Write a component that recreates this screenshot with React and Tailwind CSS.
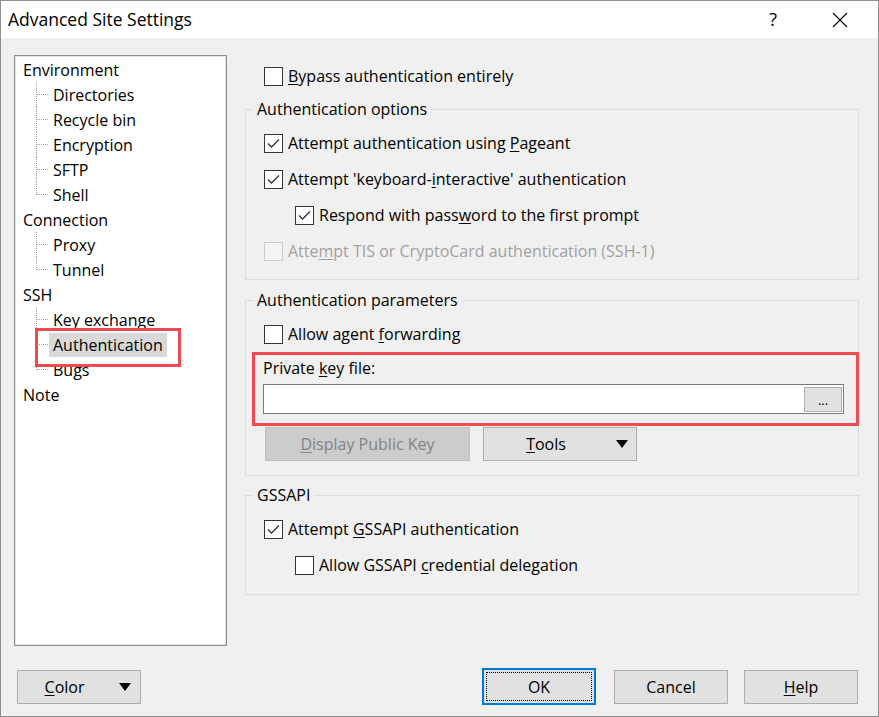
import React from "react";

const tree = [
  { label: "Environment", children: ["Directories", "Recycle bin", "Encryption", "SFTP", "Shell"] },
  { label: "Connection", children: ["Proxy", "Tunnel"] },
  { label: "SSH", children: ["Key exchange", "Authentication", "Bugs"] },
  { label: "Note", children: [] },
];

function U({ children }) {
  return <span className="underline underline-offset-[2px] decoration-1">{children}</span>;
}

function Checkbox({ checked, disabled }) {
  return (
    <span
      className={
        "flex h-[19px] w-[19px] shrink-0 items-center justify-center border " +
        (disabled ? "border-[#cccccc] bg-[#f4f4f4]" : "border-[#333333] bg-white")
      }
    >
      {checked && (
        <svg width="17" height="17" viewBox="0 0 17 17">
          <polyline points="3,8.5 6.5,12 14,4.5" fill="none" stroke="#333" strokeWidth="1.3" />
        </svg>
      )}
    </span>
  );
}

function CheckRow({ checked, disabled, indent, children }) {
  return (
    <div className={"flex h-[36px] items-center gap-[5px] " + (indent ? "ml-[31px]" : "")}>
      <Checkbox checked={checked} disabled={disabled} />
      <span className={disabled ? "text-[#a0a0a0]" : "text-black"}>{children}</span>
    </div>
  );
}

function Group({ title, className, children }) {
  return (
    <fieldset className={"border border-[#dcdcdc] " + className}>
      <legend className="ml-[7px] px-[4px] leading-[20px]">{title}</legend>
      {children}
    </fieldset>
  );
}

function Connector({ last }) {
  return (
    <svg width="26" height="25" className="shrink-0" shapeRendering="crispEdges">
      <line x1="13.5" y1="0" x2="13.5" y2={last ? 12.5 : 25} stroke="#a0a0a0" strokeDasharray="1 1" />
      <line x1="14" y1="12.5" x2="26" y2="12.5" stroke="#a0a0a0" strokeDasharray="1 1" />
    </svg>
  );
}

function Arrow() {
  return (
    <svg width="12" height="8" viewBox="0 0 12 8" className="ml-[8px] shrink-0">
      <polygon points="0,0 12,0 6,8" fill="#000" />
    </svg>
  );
}

function Button({ className, children }) {
  return (
    <div
      className={
        "flex h-[34px] items-center justify-center border border-[#adadad] bg-[#e1e1e1] " + className
      }
    >
      {children}
    </div>
  );
}

export default function App() {
  return (
    <div className="flex h-[717px] w-[879px] flex-col border border-[#8f8f8f] bg-white font-['Open_Sans',Arial,sans-serif] text-[16px] text-black">
      {/* title bar */}
      <div className="flex h-[37px] shrink-0 items-center bg-white pl-[7px]">
        <span className="text-[17.5px]">Advanced Site Settings</span>
        <span className="ml-auto mr-[55px] text-[18px]">?</span>
        <svg width="16" height="16" viewBox="0 0 16 16" className="mr-[30px]">
          <line x1="1" y1="1" x2="15" y2="15" stroke="#000" strokeWidth="1.1" />
          <line x1="15" y1="1" x2="1" y2="15" stroke="#000" strokeWidth="1.1" />
        </svg>
      </div>

      <div className="flex flex-1 flex-col bg-[#f0f0f0]">
        <div className="mt-[17px] flex">
          {/* tree */}
          <div className="ml-[13px] h-[591px] w-[213px] border border-[#8e8e8e] bg-white pl-[8px] pt-[1px] shadow-[inset_0_0_0_1px_#e2e2e2]">
            {tree.map((node) => (
              <div key={node.label}>
                <div className="flex h-[25px] items-center">{node.label}</div>
                {node.children.map((c, i) => (
                  <div key={c} className="relative flex h-[25px] items-center">
                    <Connector last={i === node.children.length - 1} />
                    <span
                      className={
                        "px-[4px] leading-[24px] " + (c === "Authentication" ? "bg-[#d9d9d9]" : "")
                      }
                    >
                      {c}
                    </span>
                    {c === "Authentication" && (
                      <div className="absolute left-[12px] top-[-4px] z-10 h-[39px] w-[146px] border-[3px] border-[#ef4b4f]" />
                    )}
                  </div>
                ))}
              </div>
            ))}
          </div>

          {/* right panel */}
          <div className="ml-[18px] w-[614px] pt-[3px]">
            <div className="pl-[19px]">
              <CheckRow>
                <U>B</U>ypass authentication entirely
              </CheckRow>
            </div>

            <Group title="Authentication options" className="mt-[5px] pb-[10px] pt-[6px]">
              <div className="pl-[18px]">
                <CheckRow checked>
                  Attempt authentication using <U>P</U>ageant
                </CheckRow>
                <CheckRow checked>
                  Attempt 'keyboard-<U>i</U>nteractive' authentication
                </CheckRow>
                <CheckRow checked indent>
                  Respond with pass<U>w</U>ord to the first prompt
                </CheckRow>
                <CheckRow disabled>
                  Atte<U>m</U>pt TIS or CryptoCard authentication (SSH-1)
                </CheckRow>
              </div>
            </Group>

            <Group title="Authentication parameters" className="mt-[10px] pb-[14px] pt-[6px]">
              <div className="pl-[18px]">
                <CheckRow>
                  Allow agent <U>f</U>orwarding
                </CheckRow>
              </div>
              <div className="ml-[6px] mr-[-1px] border-[3px] border-[#ef4b4f] pb-[9px] pl-[8px]">
                <div className="flex h-[26px] items-center">
                  <span>
                    Private <U>k</U>ey file:
                  </span>
                </div>
                <div className="mt-[3px] flex h-[30px] w-[581px] items-center justify-end border border-[#7a7a7a] bg-white pr-[1px]">
                  <div className="flex h-[25px] w-[38px] items-end justify-center border border-[#adadad] bg-[#e1e1e1] pb-[4px] text-[13px] leading-none">
                    ...
                  </div>
                </div>
              </div>
              <div className="ml-[19px] mt-[1px] flex gap-[13px]">
                <div className="flex h-[34px] w-[205px] items-center justify-center border border-[#bfbfbf] bg-[#cccccc] text-[#838383]">
                  <span>
                    <U>D</U>isplay Public Key
                  </span>
                </div>
                <Button className="w-[154px] pr-[8px]">
                  <span className="flex-1 text-center">
                    <U>T</U>ools
                  </span>
                  <Arrow />
                </Button>
              </div>
            </Group>

            <Group title="GSSAPI" className="mt-[9px] pb-[11px] pt-[6px]">
              <div className="pl-[18px]">
                <CheckRow checked>
                  Attempt <U>G</U>SSAPI authentication
                </CheckRow>
                <CheckRow indent>
                  Allow GSSAPI <U>c</U>redential delegation
                </CheckRow>
              </div>
            </Group>
          </div>
        </div>

        {/* bottom buttons */}
        <div className="mt-[22px] flex h-[37px] items-center pr-[20px]">
          <Button className="ml-[16px] w-[124px] pr-[9px]">
            <span className="flex-1 text-center">
              <U>C</U>olor
            </span>
            <Arrow />
          </Button>
          <div className="ml-auto flex h-[37px] w-[114px] items-center justify-center border-2 border-[#0078d7] bg-[#e1e1e1] p-[2px]">
            <div className="flex h-full w-full items-center justify-center border border-dotted border-black">
              OK
            </div>
          </div>
          <Button className="ml-[18px] w-[114px]">Cancel</Button>
          <Button className="ml-[16px] w-[114px]">
            <span>
              <U>H</U>elp
            </span>
          </Button>
        </div>
      </div>
    </div>
  );
}
